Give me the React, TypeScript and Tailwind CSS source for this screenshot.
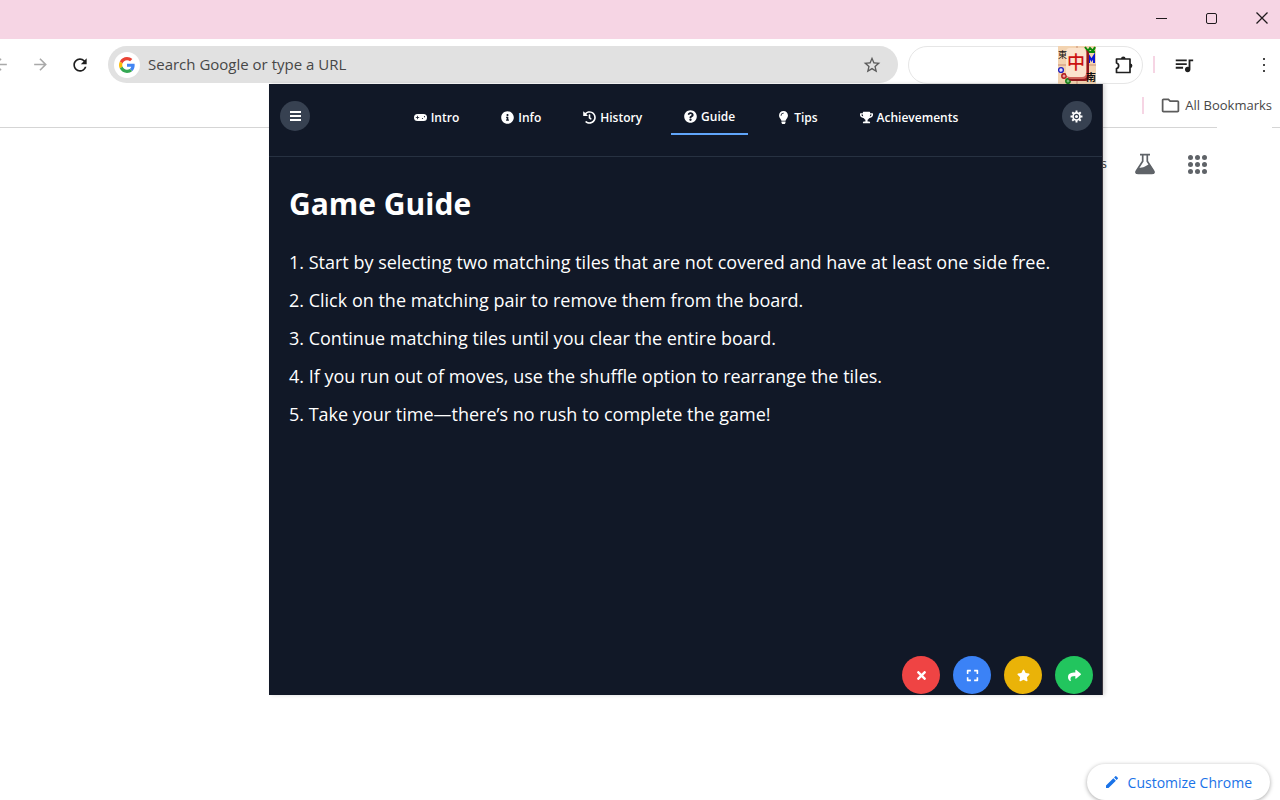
import type { ReactNode } from "react";
import {
  FaExpand,
  FaHistory,
  FaInfoCircle,
  FaLightbulb,
  FaQuestionCircle,
  FaShare,
  FaStar,
  FaTimes,
  FaTrophy,
} from "react-icons/fa";
import {
  MdArrowBack,
  MdArrowForward,
  MdCreate,
  MdOutlineFolder,
  MdQueueMusic,
  MdRefresh,
  MdStarBorder,
} from "react-icons/md";

const TABS = [
  { label: "Intro", icon: <GamepadIcon /> },
  { label: "Info", icon: <FaInfoCircle size={13} /> },
  { label: "History", icon: <FaHistory size={13} /> },
  { label: "Guide", icon: <FaQuestionCircle size={13} /> },
  { label: "Tips", icon: <FaLightbulb size={13} /> },
  { label: "Achievements", icon: <FaTrophy size={13} /> },
];

const STEPS = [
  "Start by selecting two matching tiles that are not covered and have at least one side free.",
  "Click on the matching pair to remove them from the board.",
  "Continue matching tiles until you clear the entire board.",
  "If you run out of moves, use the shuffle option to rearrange the tiles.",
  "Take your time—there’s no rush to complete the game!",
];

const ACTIONS = [
  { label: "Close", color: "bg-[#ef4444]", icon: <FaTimes /> },
  { label: "Full screen", color: "bg-[#3b82f6]", icon: <FaExpand /> },
  { label: "Rate", color: "bg-[#eab308]", icon: <FaStar /> },
  { label: "Share", color: "bg-[#22c55e]", icon: <FaShare /> },
];

function IconButton({
  label,
  className,
  children,
}: {
  label: string;
  className: string;
  children: ReactNode;
}) {
  return (
    <button
      type="button"
      aria-label={label}
      className={`flex shrink-0 items-center justify-center ${className}`}
    >
      {children}
    </button>
  );
}

function GoogleLogo() {
  return (
    <svg viewBox="0 0 48 48" className="size-4" aria-hidden="true">
      <path
        fill="#ea4335"
        d="M24 9.5c3.54 0 6.71 1.22 9.21 3.6l6.85-6.85C35.9 2.38 30.47 0 24 0 14.62 0 6.51 5.38 2.56 13.22l7.98 6.19C12.43 13.72 17.74 9.5 24 9.5z"
      />
      <path
        fill="#4285f4"
        d="M46.98 24.55c0-1.57-.15-3.09-.38-4.55H24v9.02h12.94c-.58 2.96-2.26 5.48-4.78 7.18l7.73 6c4.51-4.18 7.09-10.36 7.09-17.65z"
      />
      <path
        fill="#fbbc05"
        d="M10.53 28.59c-.48-1.45-.76-2.99-.76-4.59s.27-3.14.76-4.59l-7.98-6.19C.92 16.46 0 20.12 0 24c0 3.88.92 7.54 2.56 10.78l7.97-6.19z"
      />
      <path
        fill="#34a853"
        d="M24 48c6.48 0 11.93-2.13 15.89-5.81l-7.73-6c-2.15 1.45-4.92 2.3-8.16 2.3-6.26 0-11.57-4.22-13.47-9.91l-7.98 6.19C6.51 42.62 14.62 48 24 48z"
      />
    </svg>
  );
}

function GamepadIcon() {
  return (
    <svg viewBox="0 0 13 9" className="h-[9px] w-[13px]" aria-hidden="true">
      <rect y="1" width="13" height="7" rx="3.5" fill="currentColor" />
      <path d="M3.500 2.800v3.400M1.800 4.500h3.400" stroke="#111827" strokeWidth=".8" />
      <circle cx="8.500" cy="5.500" r=".6" fill="#111827" />
      <circle cx="10.500" cy="3.700" r=".6" fill="#111827" />
    </svg>
  );
}

function GearIcon() {
  return (
    <svg viewBox="0 0 24 24" className="size-[13px]" fill="none" stroke="currentColor" aria-hidden="true">
      <circle cx="12" cy="12" r="6.500" strokeWidth="3.200" />
      <circle cx="12" cy="12" r="2.800" fill="currentColor" stroke="none" />
      <path
        d="M12 1v4M12 19v4M1 12h4M19 12h4M4.200 4.200L7 7M17 17l2.800 2.800M19.800 4.200L17 7M7 17l-2.800 2.800"
        strokeWidth="3.600"
      />
    </svg>
  );
}

function PuzzleIcon() {
  return (
    <svg viewBox="0 0 20 20" className="size-5" aria-hidden="true">
      <path
        d="M2.500 4h13.500v13.500H2.500v-4c2.900-.6 2.900-4.900 0-5.500z"
        fill="none"
        stroke="currentColor"
        strokeWidth="1.700"
        strokeLinejoin="round"
      />
      <path d="M7 4a2.300 2.400 0 0 1 4.600 0zM16 8.400a2.400 2.300 0 0 1 0 4.600z" fill="currentColor" />
    </svg>
  );
}

function MahjongIcon() {
  return (
    <svg
      viewBox="0 0 38 38"
      className="h-[38px] w-[38px]"
      fontFamily="'Noto Sans CJK TC', sans-serif"
      aria-hidden="true"
    >
      <rect width="38" height="38" fill="#f3d3b0" />
      <path d="M19 0v38M0 19h38" stroke="#c98d74" />
      <path d="M27 1l3 4 2-3 3 3 2-4M28 6h9" stroke="#0a8a0a" strokeWidth="2" fill="none" />
      <path d="M31 17v-7l2.500 4 2.500-4v7" stroke="#0a16d8" strokeWidth="2" fill="none" />
      <circle cx="3" cy="24" r="2.400" fill="#dfe0ff" stroke="#2020c0" strokeWidth="1.400" />
      <circle cx="6" cy="30" r="2.200" fill="#e8a0a0" stroke="#b01818" strokeWidth="1.400" />
      <circle cx="10" cy="35" r="2.200" fill="#80c080" stroke="#108010" strokeWidth="1.400" />
      <rect x="10" y="4" width="21" height="31" rx="4" fill="#8e1a1c" />
      <rect x="9" y="3" width="20" height="30" rx="4" fill="#d0645a" />
      <rect x="8" y="2" width="20" height="29" rx="4" fill="#fbe3cd" />
      <text y="12" fontSize="9" fill="#111">東</text>
      <text x="28" y="35" fontSize="10" fontWeight="700" fill="#111">南</text>
      <text x="9" y="23" fontSize="18" fontWeight="500" fill="#cc1111">中</text>
    </svg>
  );
}

function FlaskIcon() {
  return (
    <svg viewBox="0 0 24 24" className="h-6 w-6" aria-hidden="true">
      <path
        d="M7 2.700h10M9.700 3v6.200L3.400 19c-.8 1.300 0 2.300 1.300 2.300h14.600c1.300 0 2.100-1 1.300-2.300L14.300 9.200V3"
        fill="none"
        stroke="#5f6368"
        strokeWidth="1.700"
      />
      <path
        d="M5.500 16c2.500-.6 4 0 6.500-1.400 1.900-1.100 2.500-2.100 4.600-2.400l4.700 7.200c.8 1.200 0 2.700-1.400 2.700H4.100c-1.400 0-2.200-1.500-1.400-2.700z"
        fill="#5f6368"
      />
    </svg>
  );
}

function AppsIcon() {
  return (
    <span className="grid grid-cols-3 gap-[2px]">
      {Array.from({ length: 9 }, (_, i) => (
        <span key={i} className="size-[5px] rounded-full bg-[#5f6368]" />
      ))}
    </span>
  );
}

function TitleBar() {
  return (
    <div className="flex h-[39px] items-center justify-end bg-[#f6d5e4] pb-[3px] text-[#1f1a1d]">
      <IconButton label="Minimize" className="h-9 w-[50px]">
        <span className="h-px w-[11px] bg-current" />
      </IconButton>
      <IconButton label="Maximize" className="h-9 w-[50px]">
        <span className="size-[11px] rounded-[2px] border border-current" />
      </IconButton>
      <IconButton label="Close window" className="-mr-2 h-9 w-[52px]">
        <svg viewBox="0 0 12 12" className="size-3" aria-hidden="true">
          <path d="M.5.5l11 11M11.500.5l-11 11" stroke="currentColor" strokeWidth="1.300" />
        </svg>
      </IconButton>
    </div>
  );
}

function Toolbar() {
  return (
    <div className="-ml-5 flex h-[51px] items-center">
      <IconButton label="Back" className="size-10 text-[#a9a9a9]">
        <MdArrowBack size={19} />
      </IconButton>
      <IconButton label="Forward" className="size-10 text-[#a9a9a9]">
        <MdArrowForward size={19} />
      </IconButton>
      <IconButton label="Reload" className="size-10 text-[#1f1f1f]">
        <MdRefresh size={20} />
      </IconButton>

      <div className="ml-2 flex h-[37px] min-w-0 flex-1 items-center rounded-full bg-[#e1e1e1] pr-4 pl-[6px]">
        <span className="flex size-[26px] shrink-0 items-center justify-center rounded-full bg-white">
          <GoogleLogo />
        </span>
        <input
          type="text"
          aria-label="Address and search bar"
          placeholder="Search Google or type a URL"
          className="ml-2 min-w-0 flex-1 bg-transparent text-[15px] outline-none placeholder:text-[#474747]"
        />
        <IconButton label="Bookmark this page" className="text-[#5c5c5c]">
          <MdStarBorder size={20} />
        </IconButton>
      </div>

      <div className="ml-[10px] flex h-[38px] w-[235px] shrink-0 items-center justify-end rounded-full border border-[#e6e6e6] pr-2">
        <IconButton label="Mahjong" className="">
          <MahjongIcon />
        </IconButton>
        <IconButton label="Extensions" className="ml-[18px] text-[#1f1f1f]">
          <PuzzleIcon />
        </IconButton>
      </div>

      <span className="ml-[10px] h-[17px] w-[2px] bg-[#f6d5e4]" />
      <IconButton label="Media controls" className="ml-[18px] text-[#1f1f1f]">
        <MdQueueMusic size={22} />
      </IconButton>
      <IconButton label="Menu" className="mr-[6px] ml-[59px] w-5">
        <span className="flex flex-col gap-1">
          <span className="size-[2px] bg-[#474747]" />
          <span className="size-[2px] bg-[#474747]" />
          <span className="size-[2px] bg-[#474747]" />
        </span>
      </IconButton>
    </div>
  );
}

function BookmarksBar() {
  return (
    <div>
      <div className="flex h-[37px] items-center justify-end pr-2 pb-[6px] text-[13px] text-[#474747]">
        <span className="mr-4 h-[17px] w-[2px] bg-[#f6d5e4]" />
        <button type="button" className="flex items-center gap-1">
          <MdOutlineFolder size={21} className="text-[#5c5c5c]" />
          All Bookmarks
        </button>
      </div>
      <div className="flex">
        <span className="h-px flex-1 bg-[#d5d5d5]" />
        <span className="ml-[55px] h-px w-2 bg-[#d5d5d5]" />
      </div>
    </div>
  );
}

function GamePopup() {
  return (
    <section className="absolute top-[84px] right-[177px] left-[269px] flex min-h-[611px] flex-col border-r border-[#3c3840] bg-[#111827] text-white shadow-[2px_0_4px_rgba(0,0,0,0.15)]">
      <header className="flex items-center justify-between border-b border-[#273141] pt-[13px] pr-[10px] pb-[21px] pl-[11px]">
        <IconButton label="Menu" className="size-[30px] rounded-full bg-[#374151]">
          <span className="flex w-[11px] flex-col gap-[2px]">
            <span className="h-[2px] bg-white" />
            <span className="h-[2px] bg-white" />
            <span className="h-[2px] bg-white" />
          </span>
        </IconButton>
        <nav className="flex gap-4">
          {TABS.map((tab) => (
            <button
              key={tab.label}
              type="button"
              className={`flex h-[38px] items-center gap-1 px-[13px] pt-[3px] text-[12px] font-semibold ${
                tab.label === "Guide" ? "border-b-2 border-[#60a5fa]" : ""
              }`}
            >
              {tab.icon}
              {tab.label}
            </button>
          ))}
        </nav>
        <IconButton label="Settings" className="size-[30px] rounded-full bg-[#374151]">
          <GearIcon />
        </IconButton>
      </header>

      <div className="flex-1 px-5 pt-[27px]">
        <h1 className="text-[30px] leading-10 font-bold">Game Guide</h1>
        <ol className="mt-6 space-y-[10px] text-[18px] leading-7">
          {STEPS.map((step, i) => (
            <li key={step}>{`${i + 1}. ${step}`}</li>
          ))}
        </ol>
      </div>

      <footer className="flex justify-end gap-[13px] pr-[9px] pb-px">
        {ACTIONS.map((action) => (
          <IconButton
            key={action.label}
            label={action.label}
            className={`size-[38px] rounded-full text-[13px] ${action.color}`}
          >
            {action.icon}
          </IconButton>
        ))}
      </footer>
    </section>
  );
}

export default function App() {
  return (
    <div className="relative flex min-h-screen flex-col overflow-hidden bg-white font-['Open_Sans','Noto_Sans',sans-serif]">
      <TitleBar />
      <Toolbar />
      <BookmarksBar />

      <main className="flex flex-1 flex-col justify-between">
        <div className="flex items-center justify-end pt-6 pr-[73px]">
          <a href="#images" className="mr-[26px] text-[13px] text-[#333]">
            Images
          </a>
          <IconButton label="Search Labs" className="mr-[31px]">
            <FlaskIcon />
          </IconButton>
          <IconButton label="Google apps" className="">
            <AppsIcon />
          </IconButton>
        </div>
        <button
          type="button"
          className="mr-[10px] flex h-9 items-center gap-2 self-end rounded-full pr-[18px] pl-[17px] text-[14px] text-[#1a73e8] shadow-[0_1px_4px_rgba(0,0,0,0.35)]"
        >
          <MdCreate size={16} />
          Customize Chrome
        </button>
      </main>

      <GamePopup />
    </div>
  );
}
